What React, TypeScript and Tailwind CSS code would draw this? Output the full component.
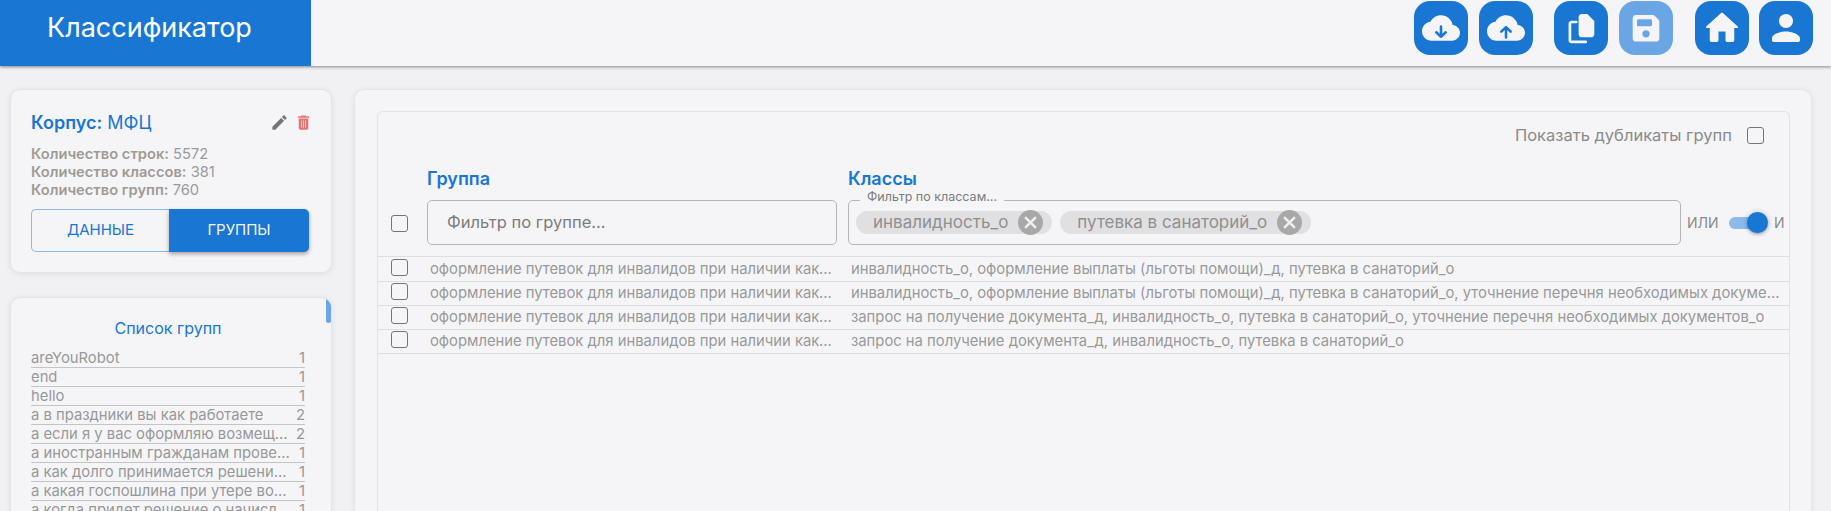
const font = { fontFamily: "Inter, 'Noto Sans', sans-serif" };

const groups = [
  ["areYouRobot", "1"],
  ["end", "1"],
  ["hello", "1"],
  ["а в праздники вы как работаете", "2"],
  ["а если я у вас оформляю возмещение расходов", "2"],
  ["а иностранным гражданам проверяют документы", "1"],
  ["а как долго принимается решение по заявлению", "1"],
  ["а какая госпошлина при утере водительских прав", "1"],
  ["а когда придет решение о начислении выплат", "1"],
];

const groupName = "оформление путевок для инвалидов при наличии какой либо справки от врача";

const rows = [
  "инвалидность_о, оформление выплаты (льготы помощи)_д, путевка в санаторий_о",
  "инвалидность_о, оформление выплаты (льготы помощи)_д, путевка в санаторий_о, уточнение перечня необходимых документов_о",
  "запрос на получение документа_д, инвалидность_о, путевка в санаторий_о, уточнение перечня необходимых документов_о",
  "запрос на получение документа_д, инвалидность_о, путевка в санаторий_о",
];

const Checkbox = ({ className = "" }: { className?: string }) => (
  <span className={`block w-[17px] h-[17px] rounded-[3px] border-[1.5px] border-[#757575] ${className}`} />
);

const ToolButton = ({ faded, children, big }: { faded?: boolean; big?: boolean; children: React.ReactNode }) => (
  <button className={`w-[54px] h-[54px] rounded-[16px] flex items-center justify-center ${faded ? "bg-[#6aa6e4]" : "bg-[#1976d2]"}`}>
    <svg viewBox="0 0 24 24" className={big ? "w-[42px] h-[42px]" : "w-[38px] h-[38px]"} fill="#f5f5f8">
      {children}
    </svg>
  </button>
);

const cloud = "M19.35 10.04C18.67 6.59 15.64 4 12 4 9.11 4 6.6 5.64 5.35 8.04 2.34 8.36 0 10.91 0 14c0 3.31 2.69 6 6 6h13c2.76 0 5-2.24 5-5 0-2.64-2.05-4.78-4.65-4.96z";
const home = "M10 19v-5h4v5c0 .55.45 1 1 1h3c.55 0 1-.45 1-1v-7h1.7c.46 0 .68-.57.33-.87L12.67 3.6c-.38-.34-.96-.34-1.34 0l-8.36 7.53c-.34.3-.13.87.33.87H5v7c0 .55.45 1 1 1h3c.55 0 1-.45 1-1z";
const person = "M12 12c2.21 0 4-1.79 4-4s-1.79-4-4-4-4 1.79-4 4 1.79 4 4 4zm0 2c-2.67 0-8 1.34-8 4v1c0 .55.45 1 1 1h14c.55 0 1-.45 1-1v-1c0-2.66-5.33-4-8-4z";

const Chip = ({ label }: { label: string }) => (
  <span className="flex items-center h-[23px] rounded-full bg-[#e0e0e3] pl-[17px] pr-[9px] text-[17px] text-[#8f8f8f] whitespace-nowrap">
    {label}
    <svg viewBox="0 0 24 24" className="w-[25px] h-[25px] ml-[10px] -my-[2px]">
      <circle cx="12" cy="12" r="12" fill="#a8a8a8" />
      <path d="M7.5 7.5l9 9M16.5 7.5l-9 9" stroke="#f0f0f3" strokeWidth="2.4" strokeLinecap="round" />
    </svg>
  </span>
);

export default function App() {
  return (
    <div className="h-[511px] overflow-hidden bg-[#f1f1f4] flex flex-col" style={font}>
      <header className="h-[66px] shrink-0 flex items-start justify-between bg-[#f5f5f8] shadow-[0_1px_3px_rgba(0,0,0,0.45)] relative z-10">
        <div className="w-[311px] h-[66px] bg-[#1976d2] pl-[47px] pt-[10px] text-[27px] leading-[36px] text-white">Классификатор</div>
        <div className="flex pt-[1px] pr-[18px]">
          <ToolButton>
            <path d={cloud} />
            <path d="M12 11v6.500M9 14.700l3 2.800 3-2.800" fill="none" stroke="#1976d2" strokeWidth="1.6" strokeLinecap="round" strokeLinejoin="round" />
          </ToolButton>
          <div className="ml-[11px]">
            <ToolButton>
              <path d={cloud} />
              <path d="M12 18v-6.500M9 14.300l3-2.800 3 2.800" fill="none" stroke="#1976d2" strokeWidth="1.6" strokeLinecap="round" strokeLinejoin="round" />
            </ToolButton>
          </div>
          <div className="ml-[21px]">
            <ToolButton>
              <path d="M12.500 3.200h3.500l4.400 4.400v8.300c0 1.100-.9 2-2 2h-5.900c-1.100 0-2-.9-2-2V5.200c0-1.100.9-2 2-2z" />
              <path d="M9 8.200H6.200c-.6 0-1.200.5-1.200 1.200v10.200c0 .7.5 1.200 1.200 1.200h8.800" fill="none" stroke="#f5f5f8" strokeWidth="1.7" strokeLinecap="round" />
            </ToolButton>
          </div>
          <div className="ml-[11px]">
            <ToolButton faded>
              <path
                fillRule="evenodd"
                d="M5.600 3.800h10.600c.5 0 1 .2 1.400.6l2.200 2.200c.4.4.6.9.6 1.400v10.600c0 1.100-.9 2-2 2H5.600c-1.100 0-2-.9-2-2V5.800c0-1.100.9-2 2-2zM7.300 6.500h7.500c.6 0 1 .4 1 1v2.400c0 .6-.4 1-1 1H7.300c-.6 0-1-.4-1-1V7.500c0-.6.4-1 1-1zM12 13.400a2.300 2.300 0 1 0 0 4.600 2.300 2.300 0 1 0 0-4.600z"
              />
            </ToolButton>
          </div>
          <div className="ml-[22px]"><ToolButton big><path d={home} /></ToolButton></div>
          <div className="ml-[10px]"><ToolButton big><path d={person} /></ToolButton></div>
        </div>
      </header>

      <div className="flex flex-1 min-h-0 pt-[23px] pl-[10px] pr-[19px] gap-[22px]">
        <aside className="w-[322px] shrink-0 flex flex-col gap-[24px]">
          <section className="h-[184px] shrink-0 rounded-[10px] border border-[#e4e4e7] bg-[#f5f5f8] shadow-[0_1px_6px_rgba(0,0,0,0.08)] pl-[20px] pr-[21px] pt-[20px]">
            <div className="flex items-center justify-between h-[24px]">
              <div className="text-[18px] text-[#1976d2]"><b className="font-semibold">Корпус:</b> МФЦ</div>
              <div className="flex items-center gap-[5px] -mr-[3px]">
                <svg viewBox="0 0 24 24" className="w-[19px] h-[19px]" fill="#757575">
                  <path d="M3 17.250V21h3.750L17.810 9.940l-3.750-3.750L3 17.250zM20.710 7.040c.39-.39.39-1.020 0-1.410l-2.340-2.340a.996.996 0 0 0-1.410 0l-1.830 1.830 3.750 3.750 1.830-1.830z" />
                </svg>
                <svg viewBox="0 0 24 24" className="w-[19px] h-[19px]" fill="#e57373">
                  <path d="M6 19c0 1.100.9 2 2 2h8c1.100 0 2-.9 2-2V7H6v12zM19 4h-3.500l-1-1h-5l-1 1H5v2h14V4z" />
                  <path d="M9.500 9.500v9M12 9.500v9M14.500 9.500v9" stroke="#f5f5f8" strokeWidth="0.9" fill="none" />
                </svg>
              </div>
            </div>
            <div className="mt-[11px] text-[14.7px] leading-[18px] text-[#9a9a9a]">
              <div><b className="font-semibold text-[#a09a94]">Количество строк:</b> 5572</div>
              <div><b className="font-semibold text-[#a09a94]">Количество классов:</b> 381</div>
              <div><b className="font-semibold text-[#a09a94]">Количество групп:</b> 760</div>
            </div>
            <div className="flex mt-[10px] h-[43px] text-[15px]">
              <button className="w-[138px] rounded-l-[5px] border border-r-0 border-[#8db8e8] text-[#1976d2]">ДАННЫЕ</button>
              <button className="w-[140px] rounded-r-[5px] bg-[#1976d2] text-[#f5f5f8] shadow-[0_2px_4px_rgba(0,0,0,0.35)]">ГРУППЫ</button>
            </div>
          </section>

          <section className="relative flex-1 rounded-t-[10px] border border-b-0 border-[#e4e4e7] bg-[#f5f5f8] shadow-[0_1px_6px_rgba(0,0,0,0.08)] pl-[20px] pr-[26px] pt-[18px] overflow-hidden">
            <span className="absolute right-0 top-0 w-[5px] h-[25px] rounded-full bg-[#69a6e6]" />
            <div className="text-center text-[16px] leading-[24px] text-[#1976d2] mb-[9px]">Список групп</div>
            {groups.map(([name, count]) => (
              <div key={name} className="flex justify-between gap-[8px] h-[19px] border-b border-[#c4c4c4] text-[14.8px] leading-[18px] text-[#989898]">
                <span className="truncate">{name}</span>
                <span>{count}</span>
              </div>
            ))}
          </section>
        </aside>

        <main className="flex-1 min-w-0 rounded-t-[10px] border border-b-0 border-[#e6e6e9] bg-[#f5f5f8] shadow-[0_1px_6px_rgba(0,0,0,0.08)] pt-[21px] pl-[22px] pr-[21px]">
          <div className="h-full rounded-t-[6px] border border-b-0 border-[#e2e2e5]">
            <div className="flex items-center justify-end h-[46px] pr-[25px] text-[16.5px] text-[#8a8a8a]">
              Показать дубликаты групп
              <Checkbox className="ml-[15px] border-[#616161]" />
            </div>
            <div className="flex h-[42px] items-end pb-[9px] text-[18px] leading-[24px] font-semibold text-[#1976d2]">
              <span className="ml-[49px] w-[421px]">Группа</span>
              <span>Классы</span>
            </div>
            <div className="flex items-center h-[45px]">
              <Checkbox className="ml-[13px] mt-[1px]" />
              <div className="ml-[19px] w-[410px] h-[45px] rounded-[5px] border border-[#b5b5b5] pl-[19px] flex items-center text-[16.5px] text-[#7c7c7c]">Фильтр по группе...</div>
              <div className="relative ml-[11px] w-[833px] h-[45px] rounded-[5px] border border-[#b5b5b5] pl-[7px] flex items-center gap-[8px]">
                <span className="absolute left-[11px] -top-[11px] bg-[#f5f5f8] px-[7px] text-[12.5px] leading-[14px] text-[#7c7c7c]">Фильтр по классам...</span>
                <Chip label="инвалидность_о" />
                <Chip label="путевка в санаторий_о" />
              </div>
              <span className="ml-[6px] w-[32px] shrink-0 text-[14px] text-[#8a8a8a]">ИЛИ</span>
              <span className="relative shrink-0 ml-[10px] w-[37px] h-[12px] rounded-full bg-[#8cbaea]">
                <span className="absolute -right-[2px] -top-[5px] w-[21px] h-[21px] rounded-full bg-[#1976d2] shadow-[0_1px_3px_rgba(0,0,0,0.4),0_0_0_4px_rgba(25,118,210,0.05)]" />
              </span>
              <span className="ml-[8px] text-[14px] text-[#8a8a8a]">И</span>
            </div>
            <div className="mt-[11px] pt-[1px] border-t border-[#dedee1]">
              {rows.map((classes, i) => (
                <div key={i} className="flex items-center h-[24px] border-b border-[#dedee1] text-[14.8px] text-[#999999]">
                  <Checkbox className="ml-[13px] mb-[5px] shrink-0" />
                  <span className="ml-[22px] w-[404px] shrink-0 truncate">{groupName}</span>
                  <span className="ml-[17px] mr-[8px] truncate">{classes}</span>
                </div>
              ))}
            </div>
          </div>
        </main>
      </div>
    </div>
  );
}
